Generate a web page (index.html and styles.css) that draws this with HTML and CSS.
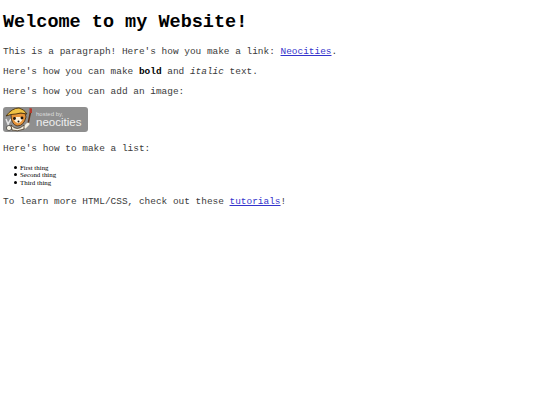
FILE: index.html
```html
<!DOCTYPE html>
<html>
<head>
<meta charset="utf-8">
<title>My Website</title>
<link rel="stylesheet" href="styles.css">
</head>
<body>
<h1>Welcome to my Website!</h1>
<p>This is a paragraph! Here's how you make a link: <a href="#">Neocities</a>.</p>
<p>Here's how you can make <strong>bold</strong> and <em>italic</em> text.</p>
<p>Here's how you can add an image:</p>
<div class="badge">
<svg class="mascot" width="32" height="25" viewBox="0 0 32 25">
<path d="M27.5 5 L25 17" stroke="#5e3418" stroke-width="1.5"/>
<path d="M26.5 1 L29 1.5 L29 6 L26.5 6 Z" fill="#b5392c"/>
<path d="M25 17 L22 20" stroke="#f6f1e2" stroke-width="3" stroke-linecap="round"/>
<path d="M3 12 L5 17 M8 12 L5 17 L6 22" stroke="#e4e4e4" stroke-width="1.5" fill="none"/>
<circle cx="6" cy="21" r="2.6" fill="#f6f1e2" stroke="#333" stroke-width="0.7"/>
<path d="M8 18 Q14 25 21 18 L21 22 Q14 25 9 23 Z" fill="#f6f1e2" stroke="#3c2a14" stroke-width="0.7"/>
<path d="M8 8 Q8 17 14 19 Q21 19 23 10 L22 6 L10 6 Z" fill="#e8953a" stroke="#3c2a14" stroke-width="0.8"/>
<path d="M3 9 Q9 1 16 1 Q21 2 24 7 Q17 5 13 7 Q8 7 3 9 Z" fill="#f0c244" stroke="#4a3212" stroke-width="0.9"/>
<path d="M11 13 Q15 20 20 12 L17 10 L13 10 Z" fill="#fff3dc"/>
<circle cx="11.5" cy="11.5" r="1.4" fill="#1d1510"/>
<circle cx="19" cy="11" r="1.4" fill="#1d1510"/>
<circle cx="15.5" cy="14.5" r="1" fill="#1d1510"/>
</svg>
<div class="badge-text"><span class="hosted">hosted by,</span><span class="neo">neocities</span></div>
</div>
<p class="after-badge">Here's how to make a list:</p>
<ul>
<li>First thing</li>
<li>Second thing</li>
<li>Third thing</li>
</ul>
<p>To learn more HTML/CSS, check out these <a href="#">tutorials</a>!</p>
</body>
</html>
```
FILE: styles.css
```css
body { margin: 0; padding: 13px 3px 0; font-family: "Liberation Mono", monospace; font-size: 9.45px; line-height: 11px; color: #3a3a3a; background: #fff; }
h1 { font-size: 18.5px; line-height: 19px; margin: 0 0 14px; color: #000; }
p { margin: 0 0 9px; }
a { color: #33c; }
strong { color: #000; }
ul { list-style: none; font-family: "Liberation Serif", serif; font-size: 6.9px; line-height: 7.5px; color: #000; padding-left: 11px; margin: 0 0 9.5px; }
li { display: flex; align-items: center; gap: 3px; }
li::before { content: ""; width: 3px; height: 3px; border-radius: 50%; background: #000; }
.badge { display: flex; width: 85px; height: 25px; margin: 10px 0 11px; background: #8f8f8f; border-radius: 3px; overflow: hidden; }
.badge-text { display: flex; flex-direction: column; color: #eee; font-family: "Liberation Sans", sans-serif; line-height: 1; padding: 4px 0 0 1px; }
.hosted { font-size: 6px; color: #ddd; }
.neo { font-size: 11.5px; }
.after-badge { margin-bottom: 9.5px; }
```
